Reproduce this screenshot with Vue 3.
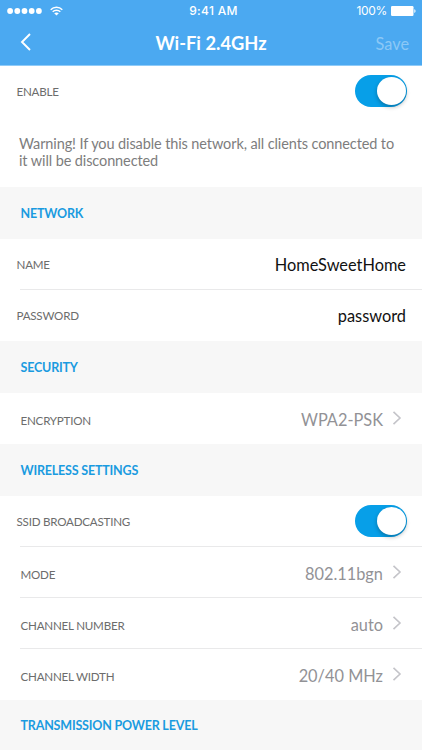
<script setup>
import { ref } from 'vue'

const sections = ref([
  {
    title: 'NETWORK',
    rows: [
      { label: 'NAME', value: 'HomeSweetHome', kind: 'field' },
      { label: 'PASSWORD', value: 'password', kind: 'field' },
    ],
  },
  { title: 'SECURITY', rows: [{ label: 'ENCRYPTION', value: 'WPA2-PSK', kind: 'link' }] },
  {
    title: 'WIRELESS SETTINGS',
    rows: [
      { label: 'SSID BROADCASTING', kind: 'switch', on: true },
      { label: 'MODE', value: '802.11bgn', kind: 'link' },
      { label: 'CHANNEL NUMBER', value: 'auto', kind: 'link' },
      { label: 'CHANNEL WIDTH', value: '20/40 MHz', kind: 'link' },
    ],
  },
  { title: 'TRANSMISSION POWER LEVEL', rows: [] },
])
const enabled = ref(true)
</script>

<template>
  <main class="screen">
    <header class="header">
      <div class="status">
        <div class="status-left">
          <svg class="dots" width="36" height="8" viewBox="0 0 36 8">
            <circle v-for="i in 5" :key="i" :cx="3.1 + (i - 1) * 7.2" cy="4" r="2.9" fill="#fff" />
          </svg>
          <svg class="wifi" width="13" height="10" viewBox="0 0 13 10">
            <g fill="none" stroke="#fff" stroke-width="1.45">
              <path d="M.7 3.7C3.9.5 9.1.5 12.3 3.7" />
              <path d="M2.7 5.8C4.8 3.7 8.2 3.7 10.3 5.8" />
            </g>
            <path d="M4.2 7.3C5.5 6.1 7.5 6.1 8.8 7.3L6.5 9.6Z" fill="#fff" />
          </svg>
        </div>
        <span class="time">9:41 AM</span>
        <div class="status-right">
          <span class="percent">100%</span>
          <svg width="25" height="10" viewBox="0 0 25 10">
            <rect width="22.5" height="10" rx="1.2" fill="#fff" />
            <path d="M23.3 3.2C24.9 3.4 24.9 6.6 23.3 6.8Z" fill="#fff" />
          </svg>
        </div>
      </div>
      <nav class="nav">
        <svg class="back" width="12" height="18" viewBox="0 0 12 18">
          <path d="M10 1L2 9L10 17" fill="none" stroke="#fff" stroke-width="1.9" />
        </svg>
        <h1 class="title">Wi-Fi 2.4GHz</h1>
        <span class="save">Save</span>
      </nav>
    </header>

    <section class="enable">
      <div class="row switch">
        <span class="label">ENABLE</span>
        <button class="toggle" :class="{ on: enabled }" @click="enabled = !enabled"><i class="knob"></i></button>
      </div>
      <p class="warning">Warning! If you disable this network, all clients connected to<br />it will be disconnected</p>
    </section>

    <section v-for="s in sections" :key="s.title" class="group">
      <h2 class="band">{{ s.title }}</h2>
      <div v-for="r in s.rows" :key="r.label" class="row" :class="r.kind">
        <span class="label">{{ r.label }}</span>
        <button v-if="r.kind === 'switch'" class="toggle" :class="{ on: r.on }" @click="r.on = !r.on">
          <i class="knob"></i>
        </button>
        <span v-else class="value">{{ r.value }}</span>
        <svg v-if="r.kind === 'link'" class="chevron" width="10" height="14" viewBox="0 0 10 14">
          <path d="M1.5 .8L8 7L1.5 13.2" fill="none" stroke="#c4c4c9" stroke-width="1.6" />
        </svg>
      </div>
    </section>
  </main>
</template>

<style>
body {
  margin: 0;
  background: #fff;
}
</style>

<style scoped>
.screen {
  width: 422px;
  height: 750px;
  overflow: hidden;
  font-family: Lato, sans-serif;
  background: #fff;
}
.header {
  height: 66px;
  box-sizing: border-box;
  border-bottom: 1px solid #8fcbf8;
  background: #4ba9f1;
  color: #fff;
}
.status {
  display: grid;
  grid-template-columns: 1fr auto 1fr;
  align-items: center;
  height: 22px;
  padding: 0 6px 0 7px;
  font-family: Inter, sans-serif;
  font-size: 12px;
  line-height: 22px;
}
.status-left,
.status-right {
  display: flex;
  align-items: center;
}
.status-left {
  gap: 7px;
}
.status-right {
  justify-content: flex-end;
  gap: 4px;
}
.percent {
  letter-spacing: -0.35px;
}
.time {
  padding-left: 4px;
  font-weight: 500;
  letter-spacing: 0.3px;
}
.nav {
  display: grid;
  grid-template-columns: 1fr auto 1fr;
  align-items: center;
  height: 43px;
  padding: 0 13px 0 13px;
}
.back {
  margin: -3px 0 0 7px;
}
.title {
  margin: -2px 0 0;
  font-size: 18.3px;
  font-weight: 700;
  line-height: 24px;
}
.save {
  justify-self: end;
  font-size: 16.3px;
  line-height: 22px;
  color: #8cc8f6;
}
.enable {
  height: 121px;
}
.row {
  display: flex;
  align-items: center;
  box-sizing: border-box;
  height: 51px;
  padding: 0 15px 0 16.5px;
  background: linear-gradient(#e9e9ea, #e9e9ea) 20px 100% / 100% 1px no-repeat;
}
.enable .row,
.row:last-child {
  background: none;
}
.label {
  flex: 1;
  font-size: 11.6px;
  letter-spacing: -0.22px;
  line-height: 16px;
  color: #6c6c6c;
}
.value {
  font-size: 16.35px;
  line-height: 22px;
  color: #929296;
}
.field .value {
  padding-top: 1px;
  color: #111;
}
.field {
  padding-right: 16px;
}
.link {
  padding: 0 20px 0 20.5px;
}
.link .label {
  padding-top: 5px;
}
.link .value {
  padding-top: 2px;
}
.chevron {
  margin-left: 9px;
  margin-top: -2px;
}
.toggle {
  width: 52px;
  height: 32px;
  margin-top: -1px;
  padding: 2px 1.5px;
  border: 0;
  border-radius: 16px;
  background: #ccc;
  display: flex;
}
.toggle.on {
  background: #079fe8;
  justify-content: flex-end;
}
.knob {
  width: 29px;
  height: 28px;
  border-radius: 50%;
  background: #fff;
  box-shadow: 0 2px 4px rgba(0, 0, 0, 0.28);
}
.warning {
  margin: 0;
  padding: 18px 0 0 19px;
  font-size: 14.5px;
  letter-spacing: -0.11px;
  line-height: 17px;
  white-space: nowrap;
  color: #7d7d7d;
}
.band {
  box-sizing: border-box;
  height: 52px;
  margin: 0;
  padding-left: 20.5px;
  background: #f7f7f7;
  font-size: 12.5px;
  letter-spacing: -0.19px;
  font-weight: 700;
  line-height: 53px;
  color: #1a9be0;
}
.group:last-child .band {
  line-height: 52px;
}
</style>
